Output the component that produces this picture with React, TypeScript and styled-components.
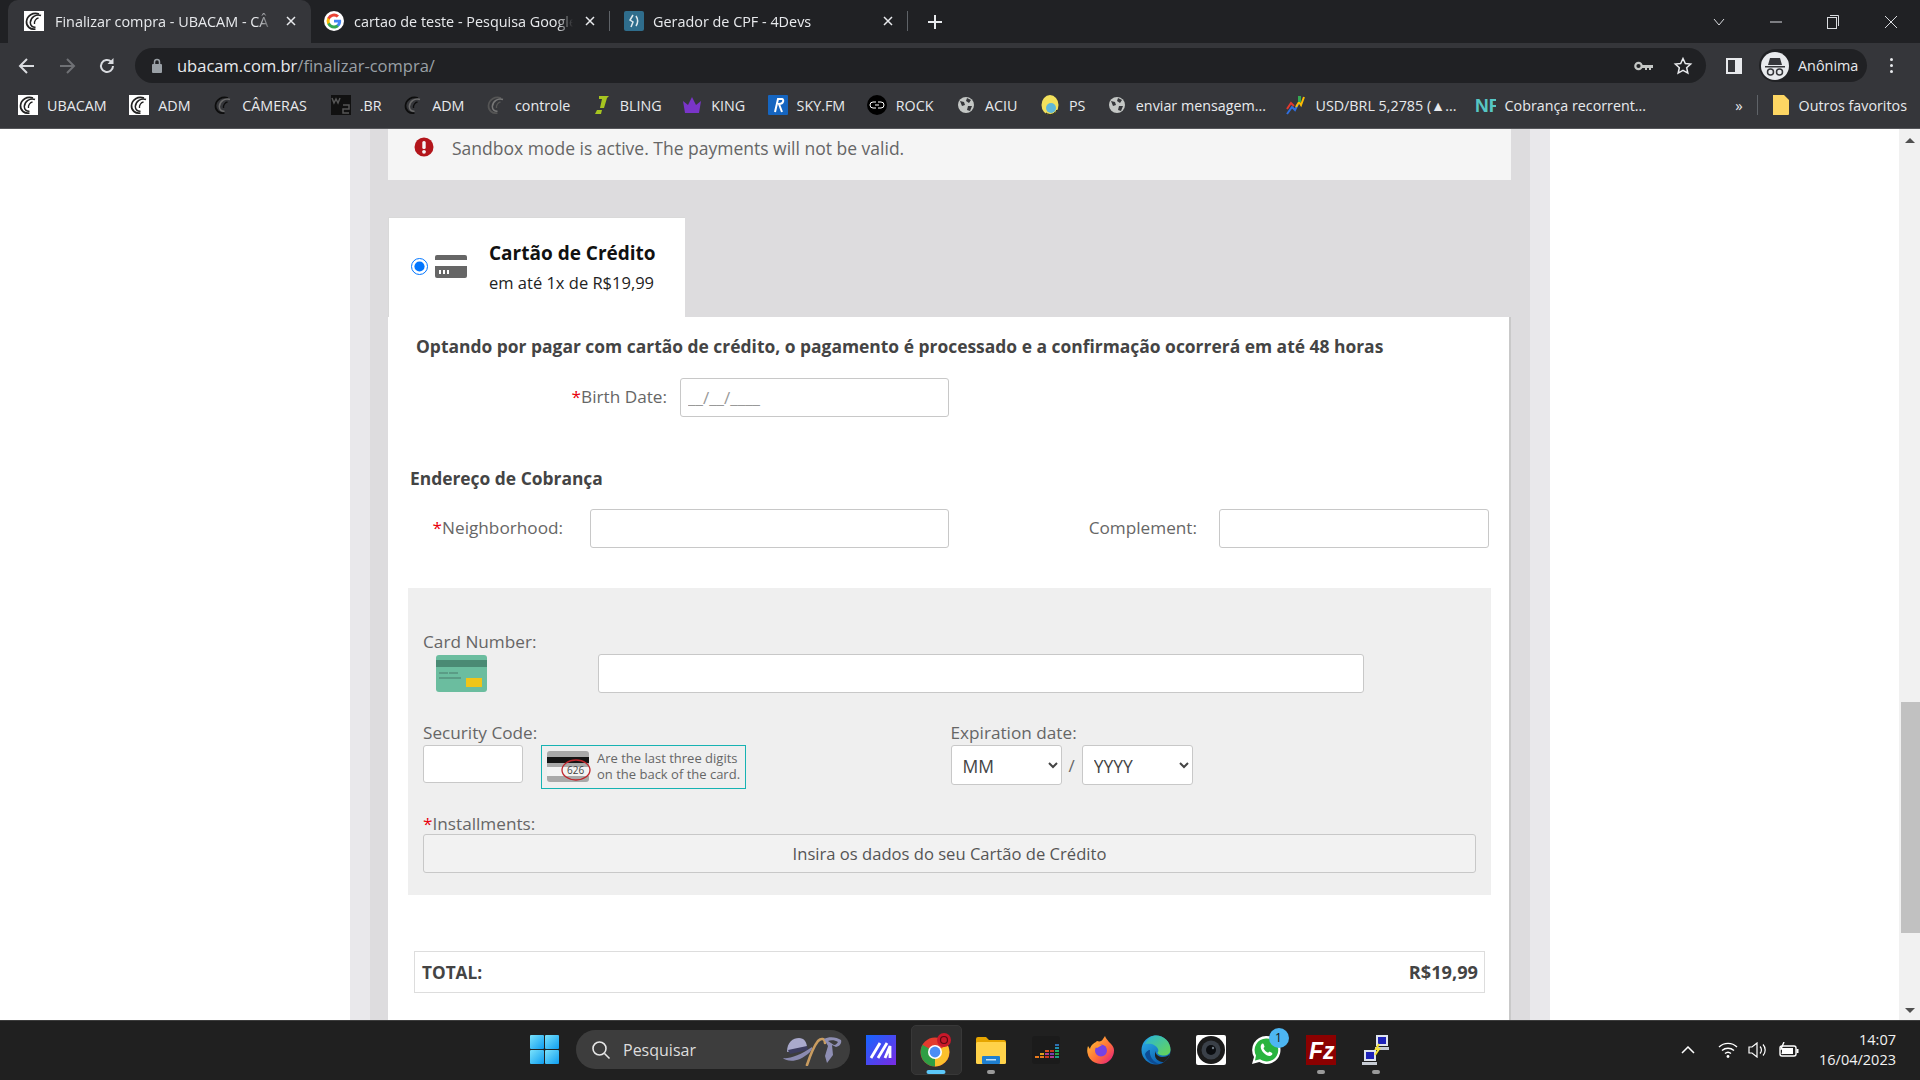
import React from "react";
import styled, { createGlobalStyle } from "styled-components";

const Global = createGlobalStyle`
  html, body { margin: 0; padding: 0; height: 100%; overflow: hidden; background: #fff; }
  * { box-sizing: border-box; }
  svg { flex: none; display: block; }
`;

const Shell = styled.div`
  width: 1920px; height: 1080px; display: flex; flex-direction: column; overflow: hidden;
  font-family: "Open Sans", "Noto Sans", sans-serif;
`;

/* ---------- browser chrome ---------- */
const TabStrip = styled.div`
  height: 43px; background: #202124; display: flex; align-items: flex-end; padding-left: 8px; flex: none;
`;
const Tab = styled.div<{ $active?: boolean; $w: number; $pl: number; $gap: number; $sep?: boolean }>`
  width: ${p => p.$w}px; display: flex; align-items: center; padding: 0 13px 0 ${p => p.$pl}px;
  gap: ${p => p.$gap}px; color: #e8eaed; font-size: 14.4px; flex: none; position: relative;
  ${p => (p.$active
    ? "height: 43px; padding-bottom: 1px; background: #35363a; border-radius: 10px 10px 0 0;"
    : "height: 38px; margin-bottom: 3px;")}
  ${p => p.$sep ? "&::after { content: ''; position: absolute; right: 0; top: 9px; height: 20px; width: 1px; background: #5f6368; }" : ""}
`;
const TabTitle = styled.span`
  flex: 1; white-space: nowrap; min-width: 0; margin-right: -11px; overflow: hidden;
  -webkit-mask-image: linear-gradient(90deg, #000 calc(100% - 27px), transparent calc(100% - 11px));
`;
const TabClose = styled.span`
  color: #e8eaed; width: 14px; height: 14px; flex: none; display: flex; align-items: center; justify-content: center;
`;
const NewTab = styled.div`
  width: 20px; height: 20px; margin: 0 0 11px 17px; flex: none; display: flex; color: #e8eaed;
`;
const WindowControls = styled.div`
  margin-left: auto; height: 43px; display: flex; align-items: center; color: #dadce0; padding-right: 22px; gap: 45px;
`;
const Toolbar = styled.div`
  height: 45px; background: #35363a; display: flex; align-items: center; padding-left: 18px; flex: none; color: #dadce0;
`;
const NavGroup = styled.div`
  display: flex; gap: 22px; align-items: center; width: 117px; flex: none;
`;
const Omnibox = styled.div`
  width: 1571px; height: 35px; border-radius: 18px; background: #202124; display: flex; align-items: center; padding: 0 13px 0 16px; flex: none;
`;
const UrlHost = styled.span`
  color: #e8eaed; font-size: 16.5px; margin-left: 14px;
`;
const UrlPath = styled.span`
  color: #9aa0a6; font-size: 16.5px;
`;
const OmniIcons = styled.div`
  margin-left: auto; display: flex; gap: 20px; align-items: center; color: #c4c7c5;
`;
const ToolRight = styled.div`
  display: flex; align-items: center; margin-left: 20px; flex: 1; color: #e8eaed;
`;
const Profile = styled.div`
  margin-left: 17px; width: 108px; height: 33px; border-radius: 17px; background: #202124; display: flex; align-items: center; padding-left: 2px; gap: 9px;
  font-size: 14.4px; color: #e8eaed;
`;
const Kebab = styled.div`
  margin-left: 23px; display: flex; flex-direction: column; gap: 3px;
  & > i { width: 3px; height: 3px; border-radius: 50%; background: #e8eaed; display: block; }
`;
const Bookmarks = styled.div`
  height: 41px; background: #35363a; border-bottom: 1px solid #55565a; display: flex; align-items: center; padding: 0 0 6px 18px; flex: none;
  color: #e8eaed; font-size: 14.3px;
`;
const Bookmark = styled.div<{ $mr: number }>`
  display: flex; align-items: center; gap: 9px; margin-right: ${p => p.$mr}px; white-space: nowrap; flex: none;
`;
const IconSlot = styled.span`
  width: 20px; height: 20px; display: flex; align-items: center; justify-content: center; flex: none;
`;
const BookmarkEnd = styled.div`
  margin-left: auto; display: flex; align-items: center; padding-right: 13px; white-space: nowrap; gap: 9px;
`;
const Chevrons = styled.span`
  font-size: 15px; margin-right: 5px; color: #e8eaed;
`;
const VSep = styled.span`
  width: 1px; height: 20px; background: #5f6368; margin-right: 5px;
`;

/* ---------- page ---------- */
const Viewport = styled.div`
  flex: 1; min-height: 0; display: flex; background: #fff; overflow: hidden;
`;
const PageArea = styled.div`
  flex: 1; min-width: 0; padding-left: 350px;
`;
const Band = styled.div`
  width: 1200px; height: 100%; background: #e9e8eb; padding: 0 20px;
`;
const Inner = styled.div`
  height: 100%; background: #dddcde; padding: 0 19px 0 18px; display: flex; flex-direction: column;
`;
const Notice = styled.div`
  height: 51px; background: #f5f5f5; display: flex; align-items: flex-start; padding: 7px 0 0 26px; gap: 18px;
  color: #666; font-size: 17.5px; line-height: 24px; flex: none;
  & > svg { margin-top: 1px; }
`;
const TabRow = styled.div`
  margin-top: 37px; display: flex; flex: none;
`;
const PayTab = styled.div`
  width: 297px; height: 100px; background: #fff; border: 1px solid #d9d9d9; border-bottom: 0; border-right: 0; display: flex; align-items: center; padding: 0 0 2px 22px;
`;
const Radio = styled.input`
  width: 17px; height: 17px; margin: 0 7px 0 0; accent-color: #0075ff; flex: none;
`;
const PayTitleWrap = styled.div`
  margin: 2px 0 0 22px; display: flex; flex-direction: column; gap: 7px; color: #111;
`;
const PayTitle = styled.div`
  font-size: 19px; font-weight: 700; line-height: 24px; color: #111;
`;
const PaySub = styled.div`
  font-size: 16.5px; line-height: 22px; color: #222;
`;
const Panel = styled.div`
  flex: 1; background: #fff; border-right: 2px solid #c9c9c9; min-height: 0; padding: 0 0 0 20px;
  display: flex; flex-direction: column;
`;
const Lead = styled.div`
  margin: 16px 0 0 8px; font-size: 17.43px; font-weight: 700; line-height: 26px; color: #444;
`;
const FieldRow = styled.div<{ $mt: number }>`
  display: flex; align-items: center; margin-top: ${p => p.$mt}px;
`;
const Label = styled.label<{ $w: number }>`
  font-size: 17.2px; color: #666; line-height: 24px; white-space: nowrap; padding-bottom: 1px;
  width: ${p => p.$w}px; text-align: right; flex: none;
`;
const Star = styled.span`
  color: #e8000d;
`;
const TextField = styled.input<{ $w: number; $h?: number; $ml?: number; $mt?: number }>`
  width: ${p => p.$w}px; height: ${p => p.$h ?? 39}px; border: 1px solid #c8c8c8; border-radius: 3px; background: #fff; flex: none; padding: 0 7px;
  margin: ${p => p.$mt ?? 0}px 0 0 ${p => p.$ml ?? 0}px;
  font-family: inherit; font-size: 17px; color: #999; outline: none;
  &::placeholder { color: #999; opacity: 1; }
`;
const SubHead = styled.div`
  margin: 48px 0 0 2px; font-size: 17.4px; font-weight: 700; color: #444; line-height: 26px;
`;
const CardBox = styled.div`
  margin: 40px 0 0 0; width: 1083px; height: 307px; background: #efefef; padding: 42px 15px 0; flex: none; display: flex; flex-direction: column;
`;
const CardHead = styled.div`
  font-size: 17.2px; color: #666; line-height: 24px;
`;
const CardRow = styled.div`
  display: flex; align-items: flex-start; margin-top: 1px;
`;
const CardIconCell = styled.div`
  width: 175px; padding: 0 0 0 13px; flex: none;
`;
const SecurityRow = styled.div`
  display: flex; margin-top: 28px;
`;
const SecurityCol = styled.div`
  width: 527.5px; flex: none;
`;
const SecurityFields = styled.div`
  display: flex; gap: 18px; align-items: flex-start;
`;
const Hint = styled.div`
  width: 205px; height: 44px; border: 1px solid #17b3b3; padding: 0 0 0 5px; display: flex; align-items: center; gap: 6px;
  font-size: 13px; line-height: 16px; color: #666; white-space: nowrap;
`;
const HintText = styled.span`
  padding-bottom: 3px;
`;
const ExpFields = styled.div`
  display: flex; align-items: center; gap: 6px;
`;
const Picker = styled.select`
  width: 111px; height: 40px; border: 1px solid #c8c8c8; border-radius: 3px; background: #fff; color: #444; font-family: inherit; font-size: 17.5px; padding: 2px 0 0 7px; outline: none;
`;
const Slash = styled.span`
  font-size: 17px; color: #666; margin: 0 1px;
`;
const InstallLabel = styled.div`
  font-size: 17.2px; color: #666; line-height: 24px; margin-top: 23px;
`;
const InstallBox = styled.div`
  width: 1053px; height: 39px; margin-top: -2px; border: 1px solid #c8c8c8; border-radius: 3px; background: #f2f2f2; display: flex; align-items: center; justify-content: center;
  font-size: 16.6px; color: #555; padding-bottom: 1px;
`;
const TotalBox = styled.div`
  margin: 56px 0 0 6px; width: 1071px; height: 42px; border: 1px solid #ddd; display: flex; justify-content: space-between; align-items: center; padding: 0 6px 0 7px;
  font-size: 17.2px; font-weight: 700; color: #444; flex: none;
`;
const TotalAmount = styled.span`
  font-size: 18.2px;
`;

/* ---------- scrollbar ---------- */
const ScrollBar = styled.div`
  width: 21px; background: #f1f1f1; flex: none; display: flex; flex-direction: column; align-items: center; padding-top: 9px;
`;
const ScrollArrow = styled.div<{ $down?: boolean }>`
  width: 0; height: 0; border-left: 5px solid transparent; border-right: 5px solid transparent; flex: none;
  ${p => (p.$down ? "border-top: 5px solid #505050; margin-top: 75px;" : "border-bottom: 5px solid #505050;")}
`;
const ScrollThumb = styled.div`
  width: 19px; height: 231px; background: #c1c1c1; margin-top: 559px; flex: none; align-self: flex-end;
`;

/* ---------- taskbar ---------- */
const Taskbar = styled.div`
  height: 60px; border-top: 1px solid #3c3c3c; background: #202020; display: flex; align-items: center; flex: none; color: #fff; padding-bottom: 2px;
`;
const Win = styled.div`
  margin-left: 530px; display: grid; grid-template-columns: 14px 14px; grid-template-rows: 14px 14px; gap: 1px; flex: none;
  & > i { display: block; background: linear-gradient(135deg, #7ae2fb, #0e9df0); border-radius: 1px; }
`;
const Search = styled.div`
  margin-left: 17px; width: 274px; height: 39px; border-radius: 20px; background: #3d3d3d; display: flex; align-items: center; padding-left: 15px; gap: 12px; font-size: 16px; color: #ddd; flex: none;
`;
const SearchArt = styled.div`
  margin-left: auto; margin-right: 7px; display: flex;
`;
const Apps = styled.div`
  display: flex; margin-left: 3.5px; align-items: center;
`;
const AppSlot = styled.div<{ $active?: boolean; $dot?: "run" | "active" }>`
  width: 55px; height: 52px; display: flex; align-items: center; justify-content: center; position: relative;
  ${p => p.$active ? "&::before { content: ''; position: absolute; inset: 1px 2px 1px 2px; background: #2f2f2f; border: 1px solid #383838; border-radius: 5px; }" : ""}
  & > svg { position: relative; }
  ${p => p.$dot ? `&::after { content: ''; position: absolute; bottom: 2px; left: 50%; transform: translateX(-50%); height: 4px; border-radius: 2px; width: ${p.$dot === "active" ? 19 : 8}px; background: ${p.$dot === "active" ? "#5cc8fa" : "#9a9a9a"}; }` : ""}
`;
const Badge = styled.span`
  position: absolute; top: 4px; right: 5px; width: 20px; height: 20px; border-radius: 50%; background: #4db6f2; color: #111; font-size: 12px; display: flex; align-items: center; justify-content: center;
`;
const Tray = styled.div`
  margin-left: auto; display: flex; align-items: center; padding-right: 24px; gap: 10px;
`;
const TrayChevron = styled.span`
  margin-right: 13px; display: flex;
`;
const Clock = styled.div`
  margin-left: 10px; text-align: right; font-size: 14.5px; line-height: 20px; color: #f2f2f2;
`;

/* ---------- drawings ---------- */
const Ubacam = ({ s = 20, bg = "#fff", fg = "#222", fg2 }: { s?: number; bg?: string; fg?: string; fg2?: string }) => (
  <svg width={s} height={s} viewBox="0 0 20 20">
    {bg !== "none" && <rect width="20" height="20" fill={bg} />}
    <path d="M15 3C9 .8 3 4.500 2.500 10.500c-.3 5 4 8.500 9 7.500" fill="none" stroke={fg} strokeWidth="1.700" />
    <path d="M17 4.500C12 2.500 6.500 6.500 6.300 11.500c0 3 2.200 5 5.200 4.800" fill="none" stroke={fg2 ?? fg} strokeWidth="1.500" />
    <path d="M14.500 7c-2.500.5-4.500 3-4 6" fill="none" stroke={fg} strokeWidth="1.300" />
  </svg>
);
const GoogleG = () => (
  <svg width="20" height="20" viewBox="0 0 24 24">
    <circle cx="12" cy="12" r="12" fill="#fff" />
    <path d="M20.600 12.200c0-.6-.1-1.200-.2-1.800H12v3.400h4.800a4.100 4.100 0 0 1-1.800 2.700v2.200h2.900c1.700-1.500 2.700-3.800 2.700-6.500z" fill="#4285F4" />
    <path d="M12 21c2.400 0 4.400-.8 5.900-2.200L15 16.500c-.8.5-1.800.9-3 .9-2.300 0-4.300-1.600-5-3.700H4v2.300A9 9 0 0 0 12 21z" fill="#34A853" />
    <path d="M7 13.700a5.400 5.400 0 0 1 0-3.400V8H4a9 9 0 0 0 0 8z" fill="#FBBC05" />
    <path d="M12 6.600c1.300 0 2.500.5 3.400 1.300L18 5.400A9 9 0 0 0 4 8l3 2.300c.7-2.100 2.700-3.700 5-3.700z" fill="#EA4335" />
  </svg>
);
const Devs = () => (
  <svg width="20" height="20" viewBox="0 0 20 20">
    <rect width="20" height="20" rx="2" fill="#2f6d8c" />
    <path d="M9 4 6 9l3 2-2 5M12 5c2 3 2 7 0 10" fill="none" stroke="#dfe9ee" strokeWidth="1.500" />
  </svg>
);
const X = () => (
  <TabClose>
    <svg width="10" height="10" viewBox="0 0 10 10"><path d="M1 1l8 8M9 1 1 9" stroke="currentColor" strokeWidth="1.500" /></svg>
  </TabClose>
);
const Globe = () => (
  <svg width="18" height="18" viewBox="0 0 18 18">
    <circle cx="9" cy="9" r="8" fill="#c4c7c5" />
    <path d="M3 5l4 1 1 3-3 1zM10 2l4 2-2 3-3-2zM11 10l4 0-2 5-3-1z" fill="#35363a" />
  </svg>
);

const Bm: React.FC<{ icon: React.ReactNode; t: string; mr?: number }> = ({ icon, t, mr = 21.5 }) => (
  <Bookmark $mr={mr}><IconSlot>{icon}</IconSlot>{t}</Bookmark>
);

const CardDark = () => (
  <svg width="32" height="23" viewBox="0 0 32 23">
    <rect width="32" height="23" rx="2" fill="#666" />
    <rect y="5" width="32" height="6" fill="#fff" />
    <rect x="4" y="15" width="2" height="4" fill="#fff" /><rect x="8" y="15" width="2" height="4" fill="#fff" /><rect x="12" y="15" width="2" height="4" fill="#fff" />
  </svg>
);
const CardGreen = () => (
  <svg width="51" height="37" viewBox="0 0 51 37">
    <rect width="51" height="37" rx="3" fill="#6bbd9f" />
    <rect y="5" width="51" height="7" fill="#4a8a74" />
    <rect x="3" y="17" width="9" height="2" fill="#5a9c86" /><rect x="13" y="17" width="9" height="2" fill="#5a9c86" /><rect x="3" y="22" width="22" height="2" fill="#5a9c86" />
    <rect x="30" y="23" width="16" height="9" fill="#f0c518" />
  </svg>
);
const CvvArt = () => (
  <svg width="44" height="32" viewBox="0 0 44 32">
    <rect width="42" height="31" rx="3" fill="#a9a9a9" />
    <rect y="6" width="42" height="6" fill="#141414" />
    <rect y="16" width="42" height="9" fill="#f3f3f3" />
    <ellipse cx="29" cy="19" rx="14" ry="10" fill="none" stroke="#c0262d" strokeWidth="1.300" />
    <text x="20" y="23" fontSize="10" fontFamily="Open Sans, sans-serif" fill="#444">626</text>
  </svg>
);
const Alert = () => (
  <svg width="20" height="20" viewBox="0 0 20 20">
    <circle cx="10" cy="10" r="9.500" fill="#b3151b" />
    <rect x="8.300" y="4" width="3.400" height="8" rx="1.500" fill="#f5f5f5" />
    <circle cx="10" cy="14.800" r="1.900" fill="#f5f5f5" />
  </svg>
);

const ChromeIcon = () => (
  <svg width="32" height="34" viewBox="0 0 32 34">
    <g transform="translate(0 4)">
      <circle cx="15" cy="15" r="14.500" fill="#e33b2e" />
      <path d="M15 15 27.500 7.800A14.500 14.500 0 0 1 15 29.500z" fill="#fbc02d" />
      <path d="M15 15 15 29.500A14.500 14.500 0 0 1 2.500 7.800z" fill="#2f9e44" />
      <circle cx="15" cy="15" r="7" fill="#fff" />
      <circle cx="15" cy="15" r="5.400" fill="#4b8df5" />
    </g>
    <circle cx="24" cy="7" r="7" fill="#c8182a" />
    <circle cx="24" cy="7" r="3.500" fill="none" stroke="#5a0a12" strokeWidth="1.200" />
  </svg>
);
const Folder = () => (
  <svg width="30" height="28" viewBox="0 0 30 28">
    <path d="M0 3a2 2 0 0 1 2-2h8l3 3h15a2 2 0 0 1 2 2v3H0z" fill="#e6a500" />
    <rect y="6" width="30" height="22" rx="1.500" fill="#ffd24a" />
    <rect x="6" y="20" width="18" height="8" rx="1" fill="#1f7fd0" />
    <rect x="10" y="23" width="10" height="1.500" fill="#bfe0f8" />
  </svg>
);
const Deezer = () => {
  const cols: [number, string[]][] = [
    [3, ["#e8791c"]],
    [8, ["#e8791c", "#e0a01c"]],
    [13, ["#c9381f", "#b03a8e", "#d9541e"]],
    [18, ["#b03a8e", "#7a3fb0", "#c9381f"]],
    [23, ["#1e9c8a", "#2f9e44", "#1fae6e", "#1e8fb0", "#2f6fb0"]],
  ];
  return (
    <svg width="28" height="28" viewBox="0 0 28 28">
      <rect width="28" height="28" rx="3" fill="#1b1b1b" />
      {cols.flatMap(([x, cs]) => cs.map((c, i) => (
        <rect key={`${x}-${i}`} x={x} y={20 - i * 3} width="4" height="2" fill={c} />
      )))}
    </svg>
  );
};
const Firefox = () => (
  <svg width="30" height="30" viewBox="0 0 30 30">
    <defs><linearGradient id="ff" x1="0" y1="0" x2="1" y2="1"><stop offset="0" stopColor="#ffcf33" /><stop offset=".55" stopColor="#ff7139" /><stop offset="1" stopColor="#e31587" /></linearGradient></defs>
    <path d="M15 29A13.500 13.500 0 0 1 2 11l2 3C5 9 9 8 11 6c3 1 5 0 6-2l2-3c1 3 2 3 4 6 3 3 5 5 5 8a13.500 13.500 0 0 1-13 14z" fill="url(#ff)" />
    <circle cx="15" cy="15.500" r="6" fill="#7542e5" />
    <path d="M9 12c2-3 5-3 7-2l-5 3z" fill="#ff9a2e" />
  </svg>
);
const Edge = () => (
  <svg width="30" height="30" viewBox="0 0 30 30">
    <defs>
      <linearGradient id="ed" x1="0" y1="0" x2=".6" y2="1"><stop offset="0" stopColor="#2fb6ee" /><stop offset="1" stopColor="#0b5fb0" /></linearGradient>
      <linearGradient id="eg" x1="0" y1="0" x2="1" y2="1"><stop offset="0" stopColor="#29b6d8" /><stop offset="1" stopColor="#6ad64f" /></linearGradient>
    </defs>
    <circle cx="15" cy="15" r="14.500" fill="url(#ed)" />
    <path d="M4 9C7 3 11 .5 15 .5 23 .5 29.500 7 29.500 14.500c0 4-3 6-7 6-3 0-6-1-6-3 1-1 1-2 .5-3.500C15 10 11 8 4 9z" fill="url(#eg)" />
    <path d="M14 16c1 4 4 6 8 6 3 0 5-1 7-3-1 3-3 6-6 8-4 0-8-2-9-6z" fill="#202020" />
    <path d="M9 15c-1 6 3 12 9 14-7 1-13-4-14-10 1-2 3-4 5-4z" fill="#0d4c94" />
  </svg>
);
const Lens = () => (
  <svg width="30" height="30" viewBox="0 0 30 30">
    <rect width="30" height="30" rx="2" fill="#fff" />
    <circle cx="15" cy="15" r="14" fill="#1a1a1a" />
    <circle cx="15" cy="15" r="9.500" fill="#3a4048" />
    <circle cx="15" cy="15" r="5" fill="#0b0d10" />
    <circle cx="17" cy="13" r="1.200" fill="#6f7a85" />
  </svg>
);
const Whats = () => (
  <svg width="30" height="30" viewBox="0 0 30 30">
    <path d="M15 1a14 14 0 0 0-12 21L1 29l7.300-2A14 14 0 1 0 15 1z" fill="#fff" />
    <path d="M15 3.500A11.500 11.500 0 0 0 5 20.500L4 25.500l5-1.200A11.500 11.500 0 1 0 15 3.500z" fill="#29b43f" />
    <path d="M10.500 9c1-1 2-.5 2.300.5l.7 2c.1.6-.7 1.300-1 1.800 1 2 2.500 3.500 4.500 4.500.5-.4 1.200-1.200 1.800-1l2 1c.8.5.7 1.500 0 2.300-1.700 1.700-5 1-8-2s-4-6.800-2.300-8.600z" fill="#fff" />
  </svg>
);
const Zilla = () => (
  <svg width="30" height="30" viewBox="0 0 30 30">
    <rect width="30" height="30" fill="#8b0000" />
    <text x="3" y="24" fontSize="23" fontWeight="700" fontStyle="italic" fontFamily="Liberation Sans, sans-serif" fill="#fff">Fz</text>
  </svg>
);
const NetApp = () => (
  <svg width="30" height="34" viewBox="0 0 30 34">
    <rect x="15" y="2" width="12" height="11" fill="#dfe4ec" /><rect x="17" y="4" width="8" height="7" fill="#1e22b8" /><rect x="14" y="14" width="14" height="3" fill="#c7ccd4" />
    <rect x="3" y="17" width="12" height="11" fill="#dfe4ec" /><rect x="5" y="19" width="8" height="7" fill="#1e22b8" /><rect x="1" y="29" width="15" height="3" fill="#c7ccd4" />
    <path d="M18 11l-3 5h3l-4 6" fill="none" stroke="#f5e23a" strokeWidth="2" />
  </svg>
);
const SearchDoodle = () => (
  <svg width="60" height="32" viewBox="0 0 60 32">
    <path d="M4 18C4 8 10 4 16 4c5 0 8 4 8 10z" fill="#a9a9cc" />
    <path d="M5 16l19-4 1 4-18 4z" fill="#3c3c5e" />
    <path d="M0 24c6 1 18-3 29-11 1 3-4 8-12 12-7 3-14 2-17-1z" fill="#8a8ab0" />
    <path d="M24 31c3-9 7-19 11-24 3-3 7-3 7 2" fill="none" stroke="#c99c60" strokeWidth="2.600" strokeLinecap="round" />
    <path d="M41 5c5-3 13-2 17 1 1 3-1 6-5 7l-4-2 1 10-6 8-2-7 3-10z" fill="#8f8fb4" />
    <path d="M45 7c3-1 7-1 10 1-1 1-2 3-4 3z" fill="#3d3d3d" />
  </svg>
);

export default function App() {
  return (
    <Shell>
      <Global />
      <TabStrip>
        <Tab $active $w={303} $pl={16} $gap={11}><Ubacam /><TabTitle>Finalizar compra - UBACAM - CÂ</TabTitle><X /></Tab>
        <Tab $w={299} $pl={13} $gap={10} $sep><GoogleG /><TabTitle>cartao de teste - Pesquisa Google</TabTitle><X /></Tab>
        <Tab $w={298} $pl={14} $gap={9} $sep><Devs /><TabTitle>Gerador de CPF - 4Devs</TabTitle><X /></Tab>
        <NewTab>
          <svg width="20" height="20" viewBox="0 0 20 20"><path d="M10 3v14M3 10h14" stroke="currentColor" strokeWidth="2" /></svg>
        </NewTab>
        <WindowControls>
          <svg width="12" height="8" viewBox="0 0 12 8"><path d="M1 1l5 6 5-6" fill="none" stroke="currentColor" /></svg>
          <svg width="12" height="2" viewBox="0 0 12 2"><path d="M0 1h12" stroke="currentColor" /></svg>
          <svg width="12" height="14" viewBox="0 0 12 14"><rect x=".5" y="2.500" width="9" height="11" fill="none" stroke="currentColor" /><path d="M3 .5h8.500V11" fill="none" stroke="currentColor" /></svg>
          <svg width="14" height="14" viewBox="0 0 14 14"><path d="M1 1l12 12M13 1 1 13" stroke="currentColor" /></svg>
        </WindowControls>
      </TabStrip>
      <Toolbar>
        <NavGroup>
          <svg width="18" height="18" viewBox="0 0 18 18"><path d="M16 9H3M9 2 2 9l7 7" fill="none" stroke="#dadce0" strokeWidth="2" /></svg>
          <svg width="18" height="18" viewBox="0 0 18 18"><path d="M2 9h13M9 2l7 7-7 7" fill="none" stroke="#6f7175" strokeWidth="2" /></svg>
          <svg width="18" height="18" viewBox="0 0 18 18"><path d="M15 9a6 6 0 1 1-1.800-4.300" fill="none" stroke="#dadce0" strokeWidth="2" /><path d="M15.500 1v6h-6z" fill="#dadce0" /></svg>
        </NavGroup>
        <Omnibox>
          <svg width="12" height="15" viewBox="0 0 12 15"><rect x="1" y="6" width="10" height="9" rx="1" fill="#9aa0a6" /><path d="M3.500 6V4a2.500 2.500 0 0 1 5 0v2" fill="none" stroke="#9aa0a6" strokeWidth="1.500" /></svg>
          <UrlHost>ubacam.com.br<UrlPath>/finalizar-compra/</UrlPath></UrlHost>
          <OmniIcons>
            <svg width="19" height="10" viewBox="0 0 19 10"><circle cx="4.500" cy="5" r="3.200" fill="none" stroke="#c4c7c5" strokeWidth="2.200" /><path d="M8 4h11v3h-2v2h-2V7h-2v2h-2V7H8z" fill="#c4c7c5" /></svg>
            <svg width="20" height="20" viewBox="0 0 24 24"><path d="m12 3 2.800 6 6.400.7-4.800 4.400 1.400 6.400L12 17.200l-5.800 3.300 1.400-6.400-4.800-4.400 6.400-.7z" fill="none" stroke="#e8eaed" strokeWidth="1.800" /></svg>
          </OmniIcons>
        </Omnibox>
        <ToolRight>
          <svg width="16" height="16" viewBox="0 0 16 16"><rect x="1" y="1" width="14" height="14" fill="none" stroke="#e8eaed" strokeWidth="2" /><rect x="9" y="1" width="6" height="14" fill="#e8eaed" /></svg>
          <Profile>
            <svg width="28" height="28" viewBox="0 0 28 28">
              <circle cx="14" cy="14" r="14" fill="#e8eaed" />
              <path d="M9 6h10l2 7H7zM4 14h20v1.500H4z" fill="#35363a" />
              <circle cx="9.500" cy="20" r="3" fill="none" stroke="#35363a" strokeWidth="1.500" /><circle cx="18.500" cy="20" r="3" fill="none" stroke="#35363a" strokeWidth="1.500" />
            </svg>
            Anônima
          </Profile>
          <Kebab><i /><i /><i /></Kebab>
        </ToolRight>
      </Toolbar>
      <Bookmarks>
        <Bm icon={<Ubacam />} t="UBACAM" mr={22.7} />
        <Bm icon={<Ubacam />} t="ADM" mr={22.7} />
        <Bm icon={<Ubacam bg="none" fg="#0d0d0d" fg2="#6a6a6a" />} t="CÂMERAS" mr={24} />
        <Bm icon={<svg width="20" height="20" viewBox="0 0 20 20"><rect width="20" height="20" fill="#111" /><path d="M1 3l2 5 2-4 2 4 2-5M12 10h6v4h-6v4h6" fill="none" stroke="#555" strokeWidth="1.500" /></svg>} t=".BR" />
        <Bm icon={<Ubacam bg="none" fg="#0d0d0d" fg2="#6a6a6a" />} t="ADM" />
        <Bm icon={<Ubacam bg="none" fg="#555" fg2="#777" />} t="controle" mr={20.5} />
        <Bm icon={<svg width="20" height="20" viewBox="0 0 20 20"><path d="M8 1h10l-2 2-3 10H9L11 4H8zM6 15h5l-1 4H4z" fill="#a7c520" /></svg>} t="BLING" mr={20.5} />
        <Bm icon={<svg width="20" height="18" viewBox="0 0 20 18"><path d="M1 5l5 4 4-8 4 8 5-4-2 12H3z" fill="#7a35c9" /></svg>} t="KING" mr={22.5} />
        <Bm icon={<svg width="20" height="20" viewBox="0 0 20 20"><rect width="20" height="20" rx="1" fill="#1565c0" /><path d="M7 17 10 4h4c2 0 2 5-3 5l3 8" fill="none" stroke="#fff" strokeWidth="2" /></svg>} t="SKY.FM" />
        <Bm icon={<svg width="20" height="20" viewBox="0 0 20 20"><circle cx="10" cy="10" r="10" fill="#000" /><path d="M9 7H6a3 3 0 0 0 0 6h3M11 7h3a3 3 0 0 1 0 6h-3M8 10h4" fill="none" stroke="#fff" /></svg>} t="ROCK" mr={22.5} />
        <Bm icon={<Globe />} t="ACIU" mr={22.5} />
        <Bm icon={<svg width="18" height="22" viewBox="0 0 18 22"><ellipse cx="9" cy="11" rx="8.500" ry="10" fill="#f2e15c" /><circle cx="10" cy="14" r="5" fill="#5fb8d8" /><path d="M5 19c4 3 9 1 11-3" stroke="#111" fill="none" /></svg>} t="PS" />
        <Bm icon={<Globe />} t="enviar mensagem..." mr={20.5} />
        <Bm icon={<svg width="20" height="20" viewBox="0 0 20 20"><path d="M1 19l5-7 3 3 3-6" fill="none" stroke="#2f6fe0" strokeWidth="2" /><path d="M1 14l4-6 3 3" fill="none" stroke="#e0392f" strokeWidth="2" /><path d="M10 12l3-5 2 3 3-8" fill="none" stroke="#fbbc05" strokeWidth="2" /><rect x="12" y="1" width="3" height="6" fill="#34a853" /></svg>} t="USD/BRL 5,2785 (▲..." mr={19} />
        <Bm icon={<svg width="21" height="16" viewBox="0 0 21 16"><text x="0" y="15" fontSize="19" fontWeight="700" fontFamily="Liberation Sans, sans-serif" fill="#57c7c4">NF</text></svg>} t="Cobrança recorrent..." mr={0} />
        <BookmarkEnd>
          <Chevrons>»</Chevrons>
          <VSep />
          <svg width="18" height="20" viewBox="0 0 18 20"><path d="M1 0h11l5 5v14a1 1 0 0 1-1 1H1z" fill="#fdd663" /></svg>
          Outros favoritos
        </BookmarkEnd>
      </Bookmarks>

      <Viewport>
        <PageArea>
          <Band>
            <Inner>
              <Notice><Alert />Sandbox mode is active. The payments will not be valid.</Notice>
              <TabRow>
                <PayTab>
                  <Radio type="radio" name="pay" defaultChecked />
                  <CardDark />
                  <PayTitleWrap>
                    <PayTitle>Cartão de Crédito</PayTitle>
                    <PaySub>em até 1x de R$19,99</PaySub>
                  </PayTitleWrap>
                </PayTab>
              </TabRow>
              <Panel>
                <Lead>Optando por pagar com cartão de crédito, o pagamento é processado e a confirmação ocorrerá em até 48 horas</Lead>
                <FieldRow $mt={19}>
                  <Label $w={259}><Star>*</Star>Birth Date:</Label>
                  <TextField $w={269} $ml={13} placeholder="__/__/____" />
                </FieldRow>
                <SubHead>Endereço de Cobrança</SubHead>
                <FieldRow $mt={18}>
                  <Label $w={155}><Star>*</Star>Neighborhood:</Label>
                  <TextField $w={359} $ml={27} />
                  <Label $w={248}>Complement:</Label>
                  <TextField $w={270} $ml={22} />
                </FieldRow>
                <CardBox>
                  <CardHead>Card Number:</CardHead>
                  <CardRow>
                    <CardIconCell><CardGreen /></CardIconCell>
                    <TextField $w={766} $h={39} $mt={-1} />
                  </CardRow>
                  <SecurityRow>
                    <SecurityCol>
                      <CardHead>Security Code:</CardHead>
                      <SecurityFields>
                        <TextField $w={100} $h={38} />
                        <Hint><CvvArt /><HintText>Are the last three digits<br />on the back of the card.</HintText></Hint>
                      </SecurityFields>
                    </SecurityCol>
                    <div>
                      <CardHead>Expiration date:</CardHead>
                      <ExpFields>
                        <Picker defaultValue="MM"><option>MM</option></Picker>
                        <Slash>/</Slash>
                        <Picker defaultValue="YYYY"><option>YYYY</option></Picker>
                      </ExpFields>
                    </div>
                  </SecurityRow>
                  <InstallLabel><Star>*</Star>Installments:</InstallLabel>
                  <InstallBox>Insira os dados do seu Cartão de Crédito</InstallBox>
                </CardBox>
                <TotalBox><span>TOTAL:</span><TotalAmount>R$19,99</TotalAmount></TotalBox>
              </Panel>
            </Inner>
          </Band>
        </PageArea>
        <ScrollBar>
          <ScrollArrow />
          <ScrollThumb />
          <ScrollArrow $down />
        </ScrollBar>
      </Viewport>

      <Taskbar>
        <Win><i /><i /><i /><i /></Win>
        <Search>
          <svg width="20" height="20" viewBox="0 0 20 20"><circle cx="8.500" cy="8.500" r="6.500" fill="none" stroke="#e6e6e6" strokeWidth="1.600" /><path d="m13.500 13.500 5 5" stroke="#e6e6e6" strokeWidth="1.600" /></svg>
          Pesquisar
          <SearchArt><SearchDoodle /></SearchArt>
        </Search>
        <Apps>
          <AppSlot><svg width="30" height="30" viewBox="0 0 30 30"><defs><linearGradient id="mm" x1="0" y1="0" x2="1" y2="1"><stop offset="0" stopColor="#1565ff" /><stop offset="1" stopColor="#7a2be2" /></linearGradient></defs><rect width="30" height="30" fill="url(#mm)" /><path d="M5 23 14 8M12 23l9-15M19 23l5-12v12" fill="none" stroke="#fff" strokeWidth="2.800" /></svg></AppSlot>
          <AppSlot $active $dot="active"><ChromeIcon /></AppSlot>
          <AppSlot $dot="run"><Folder /></AppSlot>
          <AppSlot><Deezer /></AppSlot>
          <AppSlot><Firefox /></AppSlot>
          <AppSlot><Edge /></AppSlot>
          <AppSlot><Lens /></AppSlot>
          <AppSlot><Whats /><Badge>1</Badge></AppSlot>
          <AppSlot $dot="run"><Zilla /></AppSlot>
          <AppSlot $dot="run"><NetApp /></AppSlot>
        </Apps>
        <Tray>
          <TrayChevron><svg width="14" height="8" viewBox="0 0 14 8"><path d="M1 7l6-6 6 6" fill="none" stroke="#fff" strokeWidth="1.500" /></svg></TrayChevron>
          <svg width="20" height="16" viewBox="0 0 20 16"><path d="M1 5a13 13 0 0 1 18 0M4 8.500a9 9 0 0 1 12 0M7 11.500a4.500 4.500 0 0 1 6 0" fill="none" stroke="#fff" strokeWidth="1.400" /><circle cx="10" cy="14.500" r="1.400" fill="#fff" /></svg>
          <svg width="20" height="16" viewBox="0 0 20 16"><path d="M1 5h3l5-4v14l-5-4H1z" fill="none" stroke="#fff" strokeWidth="1.200" /><path d="M12 4.500a5 5 0 0 1 0 7M15 2.500a8 8 0 0 1 0 11" fill="none" stroke="#fff" strokeWidth="1.200" /></svg>
          <svg width="21" height="16" viewBox="0 0 21 16"><rect x="2" y="4" width="16" height="10" rx="2" fill="#202020" stroke="#fff" strokeWidth="1.400" /><rect x="4" y="6" width="11" height="6" fill="#fff" /><rect x="18.500" y="7" width="2" height="4" fill="#fff" /><path d="M6 0 3 7h3l-2 5" fill="none" stroke="#fff" strokeWidth="1.400" /></svg>
          <Clock>14:07<br />16/04/2023</Clock>
        </Tray>
      </Taskbar>
    </Shell>
  );
}
